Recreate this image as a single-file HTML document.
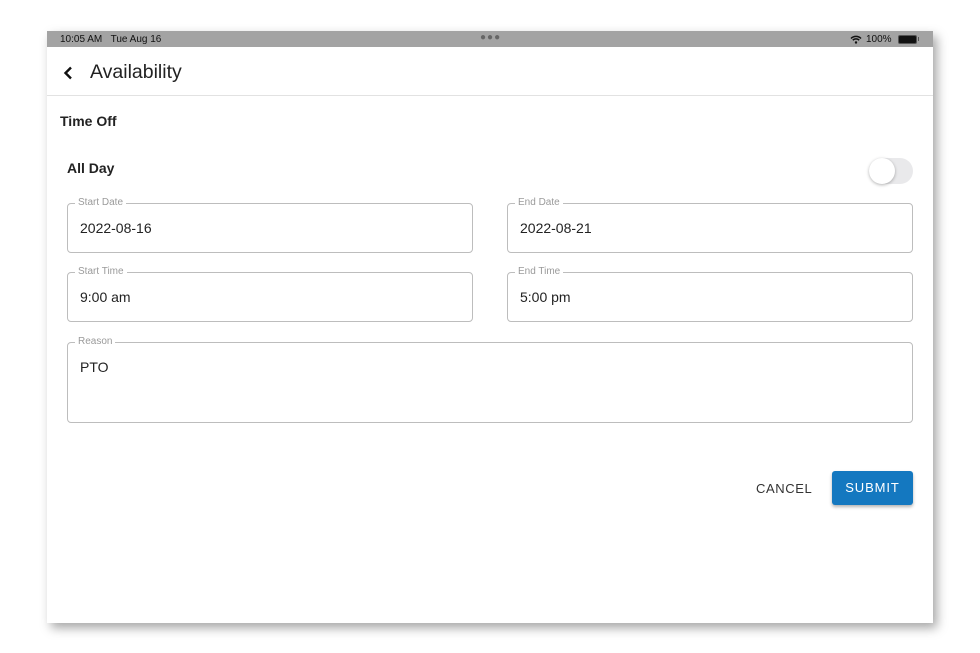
<!DOCTYPE html>
<html><head><style>
body{margin:0;width:980px;height:653px;background:#fff;position:relative;overflow:hidden;font-family:"Liberation Sans","DejaVu Sans",sans-serif;color:#222}
.scr{position:absolute;left:47px;top:31px;width:886px;height:592px;background:#fff;box-shadow:4px 5px 10px rgba(0,0,0,.35)}
.sb{position:absolute;left:0;top:0;width:886px;height:16px;background:#a3a3a3;font-size:10px;color:#111}
.a{position:absolute}
.f{position:absolute;border:1px solid #bdbdbd;border-radius:4px;box-sizing:border-box}
.f .l{position:absolute;top:-7px;left:7px;background:#fff;padding:0 3px;font-size:10px;color:#9a9a9a}
.f .v{position:absolute;left:12px;top:16px;font-size:14px;color:#222}
</style></head><body>
<div class="scr">
 <div class="sb">
  <span class="a" style="left:13px;top:3px">10:05 AM&nbsp;&nbsp;&nbsp;Tue Aug 16</span>
  <span class="a" style="left:433px;top:1px;font-size:10px;letter-spacing:1px;color:#666">●●●</span>
  <svg class="a" style="left:803px;top:4px" width="12" height="9" viewBox="0 0 12 9"><path d="M1 3.5a7 7 0 0 1 10 0M2.8 5.2a4.5 4.5 0 0 1 6.4 0" stroke="#111" stroke-width="1.5" fill="none"/><circle cx="6" cy="7.5" r="1.2" fill="#111"/></svg>
  <span class="a" style="left:819px;top:3px">100%</span>
  <div class="a" style="left:851px;top:4px;width:17px;height:7px;background:#111;border:1px solid #555;border-radius:2px"></div>
  <div class="a" style="left:871px;top:6px;width:1px;height:4px;background:#555"></div>
 </div>
 <svg class="a" style="left:16px;top:35px" width="10" height="14" viewBox="0 0 10 14"><path d="M8 1.5L2.5 7L8 12.5" stroke="#111" stroke-width="2.4" fill="none"/></svg>
 <div class="a" style="left:43px;top:30px;font-size:19.5px;color:#222">Availability</div>
 <div class="a" style="left:0;top:64px;width:886px;height:1px;background:#e2e2e2"></div>
 <div class="a" style="left:13px;top:82px;font-size:14px;font-weight:bold;color:#222">Time Off</div>
 <div class="a" style="left:20px;top:129px;font-size:14px;font-weight:bold;color:#222">All Day</div>
 <div class="a" style="left:822px;top:127px;width:44px;height:26px;border-radius:13px;background:#e9e9eb"></div>
 <div class="a" style="left:822px;top:127px;width:26px;height:26px;border-radius:13px;background:#fff;box-shadow:0 1px 3px rgba(0,0,0,.3)"></div>
 <div class="f" style="left:20px;top:172px;width:406px;height:50px"><span class="l">Start Date</span><span class="v">2022-08-16</span></div>
 <div class="f" style="left:460px;top:172px;width:406px;height:50px"><span class="l">End Date</span><span class="v">2022-08-21</span></div>
 <div class="f" style="left:20px;top:241px;width:406px;height:50px"><span class="l">Start Time</span><span class="v">9:00 am</span></div>
 <div class="f" style="left:460px;top:241px;width:406px;height:50px"><span class="l">End Time</span><span class="v">5:00 pm</span></div>
 <div class="f" style="left:20px;top:311px;width:846px;height:81px"><span class="l">Reason</span><span class="v">PTO</span></div>
 <div class="a" style="left:709px;top:450px;font-size:13px;letter-spacing:0.6px;color:#333">CANCEL</div>
 <div class="a" style="left:785px;top:440px;width:81px;height:34px;background:#1478c0;border-radius:3px;box-shadow:0 2px 3px rgba(0,0,0,.3);color:#fff;font-size:13px;letter-spacing:0.9px;text-align:center;line-height:34px">SUBMIT</div>
</div>
</body></html>
